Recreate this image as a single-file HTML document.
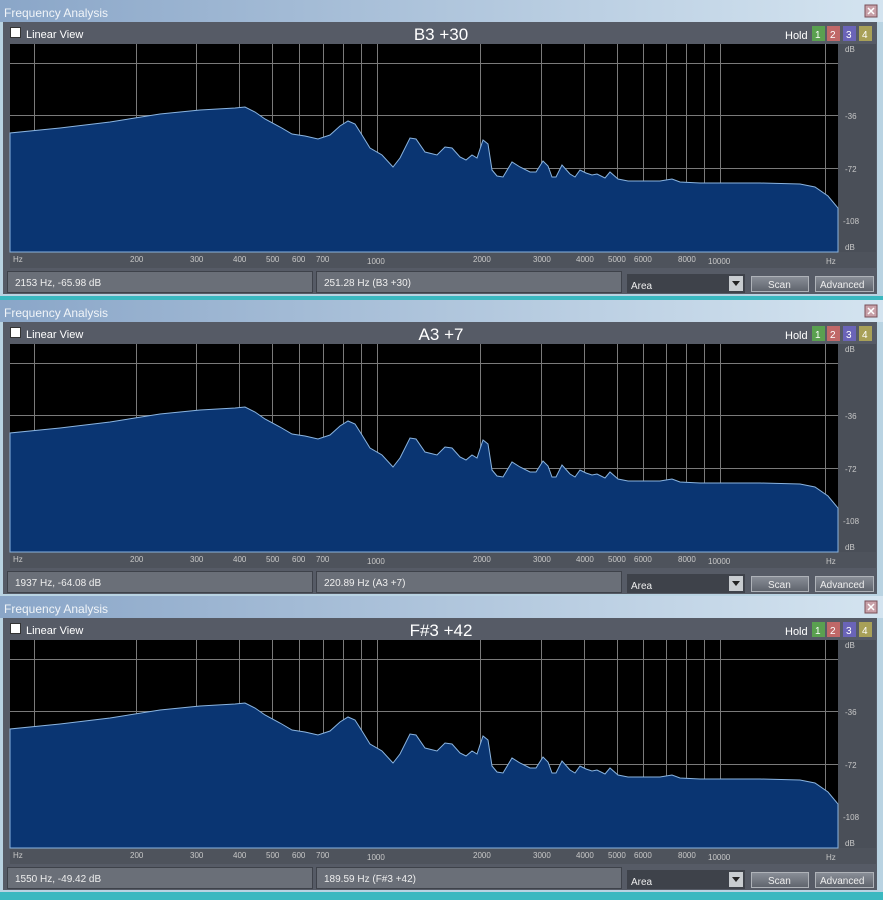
<!DOCTYPE html>
<html><head><meta charset="utf-8"><style>
html,body{margin:0;padding:0;background:#3ab8c0;}
svg{display:block;font-family:"Liberation Sans",sans-serif;}
</style></head><body>
<svg width="883" height="900" viewBox="0 0 883 900" xmlns="http://www.w3.org/2000/svg">
<defs>
<linearGradient id="tb" x1="0" y1="0" x2="1" y2="0">
<stop offset="0" stop-color="#8aa6c8"/><stop offset="1" stop-color="#d4e4f0"/></linearGradient>
<linearGradient id="btn" x1="0" y1="0" x2="0" y2="1">
<stop offset="0" stop-color="#8a8f98"/><stop offset="1" stop-color="#5e636c"/></linearGradient>
<g id="frame">
<rect x="0" y="0" width="883" height="296" fill="#b9d3e2"/>
<rect x="0" y="0" width="883" height="22" fill="url(#tb)"/>
<rect x="3" y="22" width="874" height="272" fill="#565b66"/>
<rect x="865" y="5" width="12" height="12" fill="#c8a0a8" stroke="#7a5058"/>
<path d="M868 8 L874 14 M874 8 L868 14" stroke="#fff" stroke-width="1.5"/>
<rect x="10.5" y="27.5" width="10" height="10" fill="#fff" stroke="#333"/>
<rect x="812" y="26" width="13" height="15" fill="#5aa050"/>
<rect x="827" y="26" width="13" height="15" fill="#c06868"/>
<rect x="843" y="26" width="13" height="15" fill="#6a64b8"/>
<rect x="859" y="26" width="13" height="15" fill="#a8a058"/>
<rect x="10" y="44" width="828" height="208" fill="#000"/>
<rect x="838" y="44" width="38" height="208" fill="#4a4f58"/>
<rect x="10" y="252" width="866" height="16" fill="#4e535c"/>
<g stroke="#7a7a7a" stroke-width="1">
<path d="M10 63.5H838M10 115.5H838M10 168.5H838M10 220.5H838"/>
<path d="M34.5 44V252M136.5 44V252M196.5 44V252M239.5 44V252M272.5 44V252M299.5 44V252M323.5 44V252M343.5 44V252M361.5 44V252M377.5 44V252M480.5 44V252M541.5 44V252M584.5 44V252M617.5 44V252M643.5 44V252M666.5 44V252M686.5 44V252M704.5 44V252M720.5 44V252M825.5 44V252"/>
</g>
<rect x="7.5" y="271.5" width="305" height="21" fill="#6a6f78" stroke="#3e424a"/>
<rect x="316.5" y="271.5" width="305" height="21" fill="#6a6f78" stroke="#3e424a"/>
<rect x="627" y="274" width="118" height="19" fill="#3e424a"/>
<rect x="729" y="276" width="14" height="15" fill="#c8ccd0"/>
<path d="M732 281 L740 281 L736 286Z" fill="#222"/>
<rect x="751.5" y="276.5" width="57" height="15" fill="url(#btn)" stroke="#aeb2b8"/>
<rect x="815.5" y="276.5" width="58" height="15" fill="url(#btn)" stroke="#aeb2b8"/>
<g fill="#c8c8c8" font-size="8">
<text x="13" y="262">Hz</text><text x="130" y="262">200</text><text x="190" y="262">300</text><text x="233" y="262">400</text><text x="266" y="262">500</text><text x="292" y="262">600</text><text x="316" y="262">700</text><text x="367" y="264">1000</text><text x="473" y="262">2000</text><text x="533" y="262">3000</text><text x="576" y="262">4000</text><text x="608" y="262">5000</text><text x="634" y="262">6000</text><text x="678" y="262">8000</text><text x="708" y="264">10000</text><text x="826" y="264">Hz</text>
<text x="845" y="52">dB</text><text x="845" y="119">-36</text><text x="845" y="172">-72</text><text x="843" y="224">-108</text><text x="845" y="250">dB</text>
</g>
</g>
<path id="spec" d="M10 252 L10 133 L60 128 L110 122 L160 114 L200 110 L235 108 L245 107 L255 112 L265 119 L280 127 L292 134 L305 136 L318 139 L330 135 L340 126 L348 121 L355 124 L362 135 L370 148 L382 155 L393 167 L400 158 L410 138 L416 139 L425 152 L437 155 L445 147 L452 148 L460 157 L466 160 L472 155 L477 158 L483 140 L488 144 L492 170 L497 176 L503 177 L512 162 L520 167 L530 172 L536 172 L543 161 L548 166 L552 177 L556 177 L562 165 L570 174 L575 177 L580 170 L586 173 L592 175 L597 174 L605 178 L610 172 L618 179 L628 181 L660 181 L672 179 L680 182 L700 183 L760 183 L800 184 L815 187 L828 196 L838 208 L838 252 Z" fill="#0a3572" stroke="#8ab4e0" stroke-width="1"/>
</defs>

<rect width="883" height="900" fill="#3ab8c0"/>
<g transform="translate(0,0)"><use href="#frame"/><use href="#spec"/>
<text x="4" y="17" fill="#f0f4f8" font-size="12">Frequency Analysis</text>
<text x="26" y="38" fill="#fff" font-size="11">Linear View</text>
<text x="441" y="40" fill="#fff" font-size="17" text-anchor="middle">B3 +30</text>
<text x="785" y="39" fill="#fff" font-size="11">Hold</text>
<g fill="#fff" font-size="10"><text x="815" y="38">1</text><text x="830" y="38">2</text><text x="846" y="38">3</text><text x="862" y="38">4</text></g>
<g fill="#eee" font-size="10"><text x="15" y="286">2153 Hz, -65.98 dB</text><text x="324" y="286">251.28 Hz (B3 +30)</text><text x="631" y="289">Area</text><text x="768" y="288">Scan</text><text x="820" y="288">Advanced</text></g>
</g>
<g transform="translate(0,300)"><use href="#frame"/><use href="#spec"/>
<text x="4" y="17" fill="#f0f4f8" font-size="12">Frequency Analysis</text>
<text x="26" y="38" fill="#fff" font-size="11">Linear View</text>
<text x="441" y="40" fill="#fff" font-size="17" text-anchor="middle">A3 +7</text>
<text x="785" y="39" fill="#fff" font-size="11">Hold</text>
<g fill="#fff" font-size="10"><text x="815" y="38">1</text><text x="830" y="38">2</text><text x="846" y="38">3</text><text x="862" y="38">4</text></g>
<g fill="#eee" font-size="10"><text x="15" y="286">1937 Hz, -64.08 dB</text><text x="324" y="286">220.89 Hz (A3 +7)</text><text x="631" y="289">Area</text><text x="768" y="288">Scan</text><text x="820" y="288">Advanced</text></g>
</g>
<g transform="translate(0,596)"><use href="#frame"/><use href="#spec"/>
<text x="4" y="17" fill="#f0f4f8" font-size="12">Frequency Analysis</text>
<text x="26" y="38" fill="#fff" font-size="11">Linear View</text>
<text x="441" y="40" fill="#fff" font-size="17" text-anchor="middle">F#3 +42</text>
<text x="785" y="39" fill="#fff" font-size="11">Hold</text>
<g fill="#fff" font-size="10"><text x="815" y="38">1</text><text x="830" y="38">2</text><text x="846" y="38">3</text><text x="862" y="38">4</text></g>
<g fill="#eee" font-size="10"><text x="15" y="286">1550 Hz, -49.42 dB</text><text x="324" y="286">189.59 Hz (F#3 +42)</text><text x="631" y="289">Area</text><text x="768" y="288">Scan</text><text x="820" y="288">Advanced</text></g>
</g>
</svg>
</body></html>
